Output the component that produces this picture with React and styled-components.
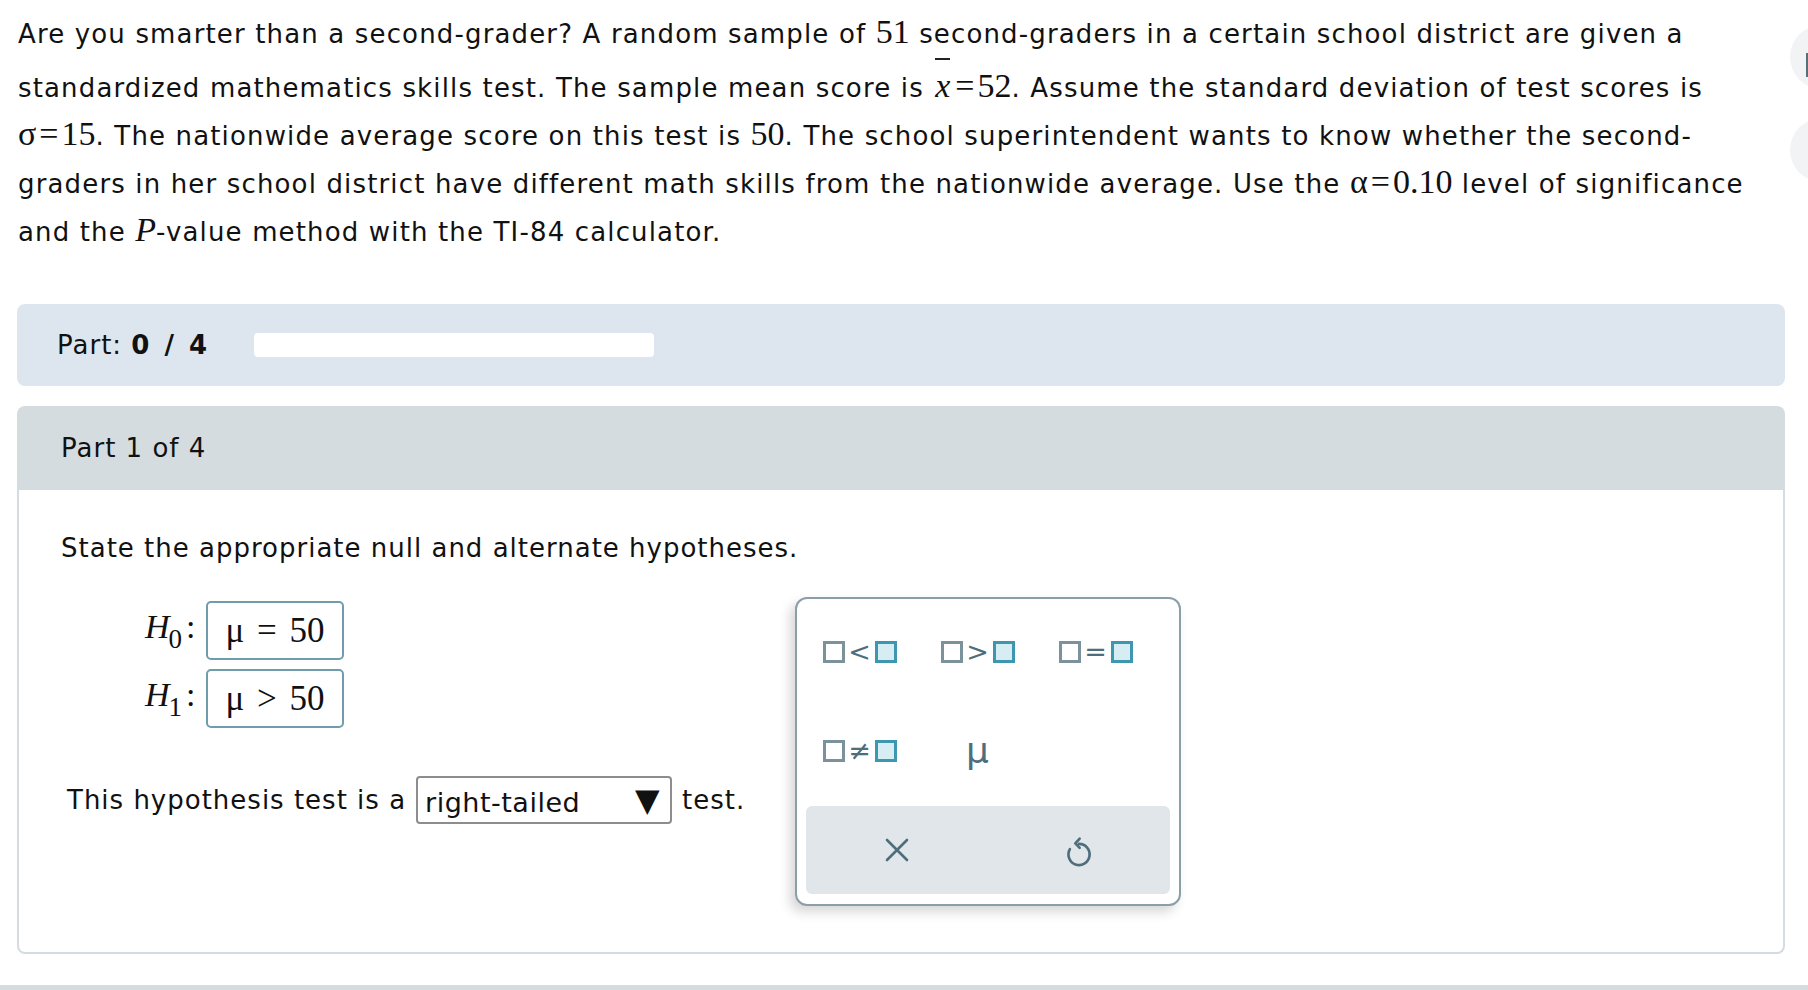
import React from "react";
import styled, { createGlobalStyle } from "styled-components";

const GlobalStyle = createGlobalStyle`
  html, body { margin: 0; padding: 0; background: #fff; overflow: hidden; }
  body { font-family: "DejaVu Sans", Verdana, sans-serif; color: #111; letter-spacing: 1px; }
`;

const Page = styled.div`
  padding: 10px 23px 0 17px;
`;

const Question = styled.p`
  margin: 0;
  padding-left: 1px;
  font-size: 26px;
  line-height: 48px;
  letter-spacing: 1.15px;
  white-space: nowrap;
`;

const M = styled.span`
  font-family: "Liberation Serif", "Times New Roman", serif;
  font-size: ${(p) => p.$size || 34}px;
  font-style: ${(p) => (p.$italic ? "italic" : "normal")};
  line-height: 1;
  letter-spacing: 0;
`;

const Eq = styled.span`
  margin: 0 3px;
`;

const XBar = styled.span`
  display: inline-block;
  font-family: "Liberation Serif", "Times New Roman", serif;
  font-style: italic;
  font-size: 34px;
  line-height: 1;
  letter-spacing: 0;
  border-top: 2px solid #222;
  padding-top: 9px;
  margin: 0 2px;
`;

const ProgressBar = styled.div`
  margin-top: 48px;
  height: 82px;
  background: #dde6ee;
  border-radius: 8px;
  display: flex;
  align-items: center;
  padding-left: 40px;
  gap: 45px;
  font-size: 26px;
`;

const Bold = styled.b`
  letter-spacing: 1.5px;
  word-spacing: 3px;
`;

const Track = styled.div`
  width: 400px;
  height: 24px;
  background: #fff;
  border-radius: 4px;
`;

const Panel = styled.section`
  margin-top: 20px;
  border-radius: 8px;
`;

const PanelHeader = styled.div`
  height: 84px;
  background: #d4dce0;
  border-radius: 8px 8px 0 0;
  display: flex;
  align-items: center;
  padding-left: 44px;
  font-size: 26px;
`;

const PanelBody = styled.div`
  border: 2px solid #d4dce0;
  border-top: none;
  border-radius: 0 0 8px 8px;
  padding: 34px 42px 46px 42px;
  font-size: 26px;
`;

const Statement = styled.div`
  line-height: 48px;
`;

const Row = styled.div`
  display: flex;
  align-items: flex-start;
  margin-top: 27px;
`;

const LeftCol = styled.div`
  width: 734px;
  padding-top: 2px;
`;

const HypRow = styled.div`
  display: flex;
  align-items: center;
  margin-left: 84px;
  & + & { margin-top: 9px; }
`;

const HLabel = styled.span`
  display: inline-block;
  width: 61px;
  font-family: "Liberation Serif", "Times New Roman", serif;
  font-size: 34px;
  letter-spacing: 0;
  white-space: nowrap;
  line-height: 1;
  margin-top: -8px;
`;

const HVar = styled.i`
  font-style: italic;
`;

const Sub = styled.span`
  display: inline-block;
  font-size: 27px;
  transform: translateY(10px);
  margin-left: -1px;
`;

const Colon = styled.span`
  margin-left: 4px;
`;

const AnswerBox = styled.div`
  width: 138px;
  height: 59px;
  box-sizing: border-box;
  border: 2px solid #6f9dab;
  border-radius: 5px;
  display: flex;
  align-items: center;
  justify-content: center;
  font-family: "Liberation Serif", "Times New Roman", serif;
  font-size: 35px;
  letter-spacing: 0;
  word-spacing: 4px;
  color: #111;
`;

const TestRow = styled.div`
  display: flex;
  align-items: center;
  margin-top: 48px;
  margin-left: 6px;
  gap: 10px;
`;

const Select = styled.div`
  width: 256px;
  height: 48px;
  box-sizing: border-box;
  border: 2px solid #8d8d8d;
  border-radius: 4px;
  display: flex;
  align-items: center;
  justify-content: space-between;
  padding: 4px 10px 0 7px;
  font-size: 27px;
  letter-spacing: 0.5px;
`;

const Arrow = styled.span`
  font-size: 32px;
  line-height: 1;
  color: #111;
  margin-top: -4px;
`;

const Palette = styled.div`
  width: 386px;
  box-sizing: border-box;
  border: 2px solid #8a9fa8;
  border-radius: 12px;
  background: #fff;
  box-shadow: -5px 6px 12px rgba(0, 0, 0, 0.16);
  padding: 3px 4px 10px 4px;
  margin-top: -2px;
`;

const KeyGrid = styled.div`
  display: grid;
  grid-template-columns: repeat(3, 118px);
  grid-auto-rows: 99px;
`;

const Key = styled.button`
  all: unset;
  display: flex;
  align-items: center;
  justify-content: center;
  gap: 3px;
  color: #4e6e7b;
  font-family: "DejaVu Sans", Verdana, sans-serif;
  font-size: ${(p) => p.$size || 26}px;
  cursor: pointer;
`;

const Sq = styled.span`
  display: inline-block;
  width: 22px;
  height: 22px;
  box-sizing: border-box;
  border: 3px solid ${(p) => (p.$blue ? "#3d97b1" : "#7b929c")};
  background: ${(p) => (p.$blue ? "#d5edf3" : "#fff")};
`;

const Op = styled.span`
  line-height: 1;
  font-size: 27px;
  color: #4e6e7b;
`;

const ActionBar = styled.div`
  display: flex;
  height: 88px;
  margin: 6px 5px 0 5px;
  background: #e0e6e9;
  border-radius: 6px;
`;

const ActionBtn = styled.button`
  all: unset;
  flex: 1;
  display: flex;
  align-items: center;
  justify-content: center;
  cursor: pointer;
`;

const SideButton = styled.div`
  position: fixed;
  right: -46px;
  top: ${(p) => p.$top}px;
  width: 64px;
  height: 64px;
  border-radius: 50%;
  background: #f1f3f5;
`;

const SideMark = styled.div`
  position: absolute;
  left: 16px;
  top: 28px;
  width: 3px;
  height: 24px;
  background: #5a6e78;
`;

const NextPanelEdge = styled.div`
  margin-top: 31px;
  height: 20px;
  background: #d4dce0;
`;

const SymKey = ({ op }) => (
  <Key>
    <Sq />
    <Op>{op}</Op>
    <Sq $blue />
  </Key>
);

const Hyp = ({ idx, value }) => (
  <HypRow>
    <HLabel>
      <HVar>H</HVar>
      <Sub>{idx}</Sub>
      <Colon>:</Colon>
    </HLabel>
    <AnswerBox>{value}</AnswerBox>
  </HypRow>
);

export default function App() {
  return (
    <>
      <GlobalStyle />
      <SideButton $top={25}>
        <SideMark />
      </SideButton>
      <SideButton $top={118} />
      <Page>
        <Question>
          Are you smarter than a second-grader? A random sample of <M>51</M>{" "}
          second-graders in a certain school district are given a
          <br />
          standardized mathematics skills test. The sample mean score is{" "}
          <XBar>x</XBar>
          <M>
            <Eq>=</Eq>52
          </M>
          . Assume the standard deviation of test scores is
          <br />
          <M>
            σ<Eq>=</Eq>15
          </M>
          . The nationwide average score on this test is <M>50</M>. The school
          superintendent wants to know whether the second-
          <br />
          graders in her school district have different math skills from the
          nationwide average. Use the{" "}
          <M>
            α<Eq>=</Eq>0.10
          </M>{" "}
          level of significance
          <br />
          and the <M $italic>P</M>-value method with the TI-84 calculator.
        </Question>

        <ProgressBar>
          <span>
            Part: <Bold>0 / 4</Bold>
          </span>
          <Track />
        </ProgressBar>

        <Panel>
          <PanelHeader>Part 1 of 4</PanelHeader>
          <PanelBody>
            <Statement>State the appropriate null and alternate hypotheses.</Statement>
            <Row>
              <LeftCol>
                <Hyp idx="0" value="μ = 50" />
                <Hyp idx="1" value="μ > 50" />
                <TestRow>
                  <span>This hypothesis test is a</span>
                  <Select>
                    <span>right-tailed</span>
                    <Arrow>▼</Arrow>
                  </Select>
                  <span>test.</span>
                </TestRow>
              </LeftCol>
              <Palette>
                <KeyGrid>
                  <SymKey op="<" />
                  <SymKey op=">" />
                  <SymKey op="=" />
                  <SymKey op="≠" />
                  <Key $size={36}>μ</Key>
                </KeyGrid>
                <ActionBar>
                  <ActionBtn aria-label="clear">
                    <svg width="26" height="26" viewBox="0 0 26 26" fill="none" stroke="#4e6e7b" strokeWidth="2.6" strokeLinecap="round">
                      <path d="M3 3 L23 23 M23 3 L3 23" />
                    </svg>
                  </ActionBtn>
                  <ActionBtn aria-label="undo">
                    <svg width="32" height="37" viewBox="0 0 24 28" fill="none" stroke="#4e6e7b" strokeWidth="2" strokeLinecap="round" strokeLinejoin="round">
                      <path d="M12 9 A8 8 0 1 1 5.1 13" />
                      <path d="M12.5 5 L9.2 8.6 L12.5 12" />
                    </svg>
                  </ActionBtn>
                </ActionBar>
              </Palette>
            </Row>
          </PanelBody>
        </Panel>
      </Page>
      <NextPanelEdge />
    </>
  );
}
